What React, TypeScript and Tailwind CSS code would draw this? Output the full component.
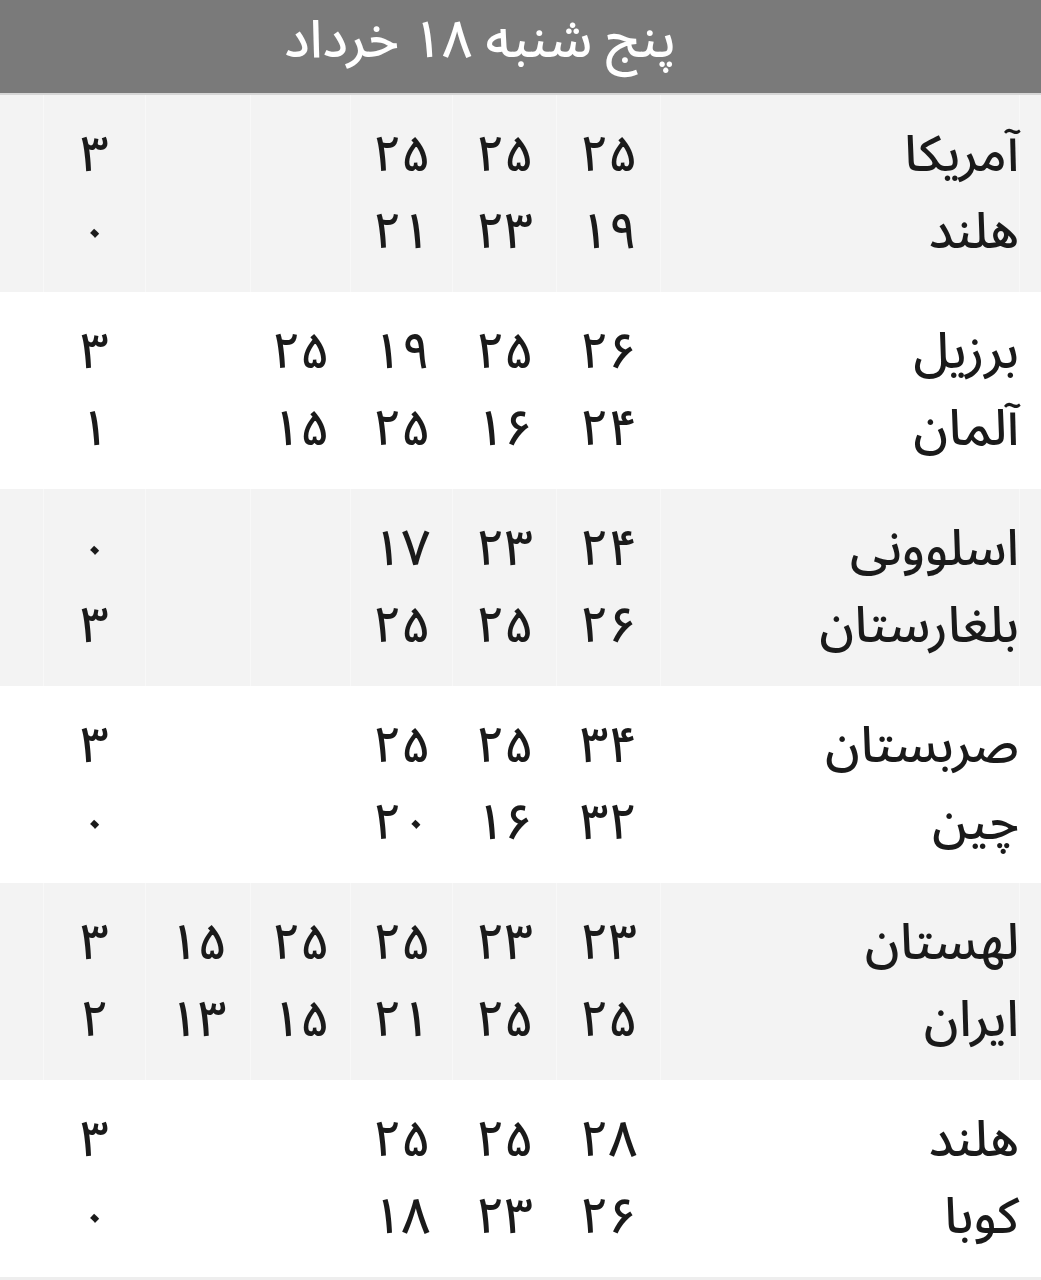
import React from "react";

const fa = (s: string) => s.replace(/\d/g, (d) => "۰۱۲۳۴۵۶۷۸۹"[Number(d)]);

type Match = { teams: [string, string]; sets: [string, string][]; total: [string, string] };

const matches: Match[] = [
  { teams: ["آمریکا", "هلند"], sets: [["25", "19"], ["25", "23"], ["25", "21"], ["", ""], ["", ""]], total: ["3", "0"] },
  { teams: ["برزیل", "آلمان"], sets: [["26", "24"], ["25", "16"], ["19", "25"], ["25", "15"], ["", ""]], total: ["3", "1"] },
  { teams: ["اسلوونی", "بلغارستان"], sets: [["24", "26"], ["23", "25"], ["17", "25"], ["", ""], ["", ""]], total: ["0", "3"] },
  { teams: ["صربستان", "چین"], sets: [["34", "32"], ["25", "16"], ["25", "20"], ["", ""], ["", ""]], total: ["3", "0"] },
  { teams: ["لهستان", "ایران"], sets: [["23", "25"], ["23", "25"], ["25", "21"], ["25", "15"], ["15", "13"]], total: ["3", "2"] },
  { teams: ["هلند", "کوبا"], sets: [["28", "26"], ["25", "23"], ["25", "18"], ["", ""], ["", ""]], total: ["3", "0"] },
];

const setWidths = ["w-[104px]", "w-[104px]", "w-[102px]", "w-[100px]", "w-[105px]"];

function Cell({ a, b, w, align = "center" }: { a: string; b: string; w: string; align?: "center" | "right" }) {
  return (
    <div
      className={`${w} shrink-0 h-full flex flex-col justify-center border-l border-white/40 ${
        align === "right" ? "items-start" : "items-center"
      }`}
    >
      <div className="h-[77px] flex items-center">{fa(a)}</div>
      <div className="h-[77px] flex items-center">{fa(b)}</div>
    </div>
  );
}

export default function App() {
  return (
    <div
      dir="rtl"
      className="w-[1041px] bg-white text-[#1a1a1a]"
      style={{ fontFamily: '"Noto Sans Arabic", "DejaVu Sans", sans-serif' }}
    >
      <div className="h-[95px] bg-[#7a7a7a] border-b-2 border-[#d6d6d6] flex items-center justify-center pr-[81px] pb-[12px]">
        <span className="text-white text-[52px] font-medium leading-[72px]">پنج شنبه ۱۸ خرداد</span>
      </div>
      {matches.map((m, i) => (
        <div key={i} className={`h-[197px] flex ${i % 2 === 0 ? "bg-[#f3f3f3]" : "bg-white"} text-[50px] font-medium leading-none`}>
          <div className="w-[22px] shrink-0 border-l border-white/40" />
          <Cell a={m.teams[0]} b={m.teams[1]} w="w-[359px]" align="right" />
          {m.sets.map((s, j) => (
            <Cell key={j} a={s[0]} b={s[1]} w={setWidths[j]} />
          ))}
          <Cell a={m.total[0]} b={m.total[1]} w="w-[102px]" />
          <div className="w-[43px] shrink-0" />
        </div>
      ))}
      <div className="h-[3px] bg-[#eeeeee]" />
    </div>
  );
}
